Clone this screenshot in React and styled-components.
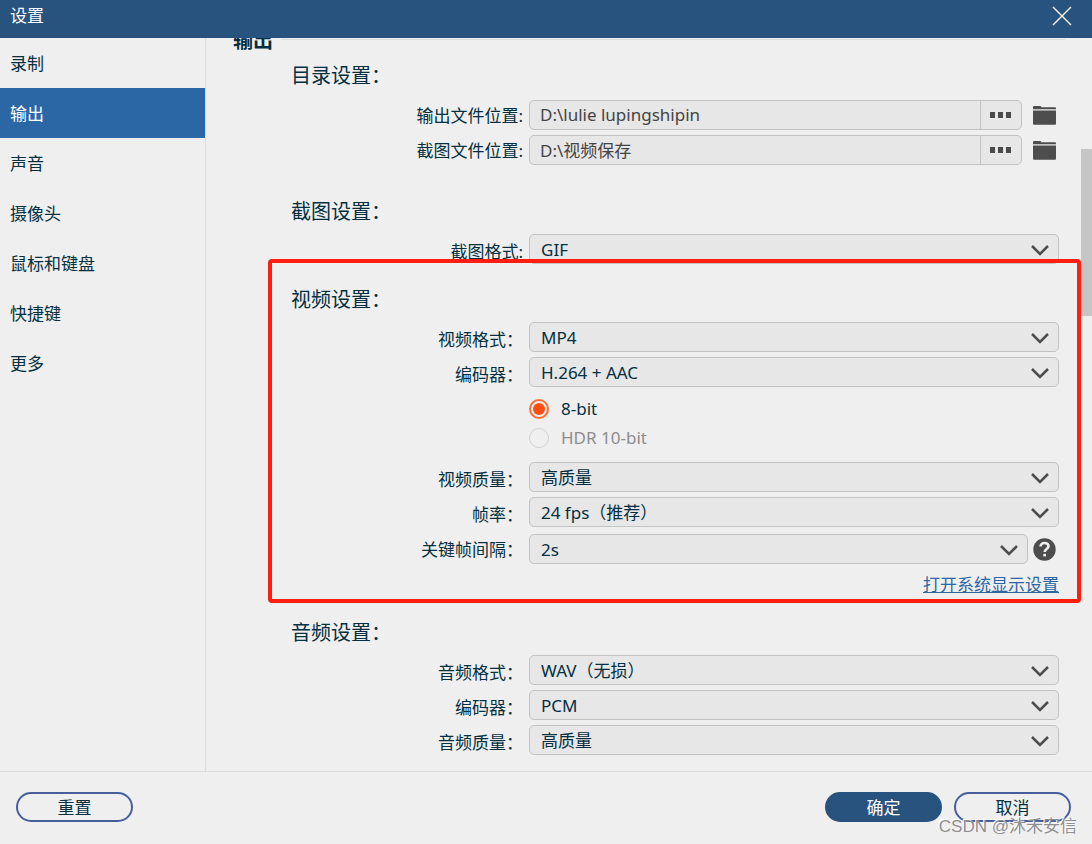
import React, { useState } from "react"
import styled, { createGlobalStyle } from "styled-components"

const tabs = ["录制", "输出", "声音", "摄像头", "鼠标和键盘", "快捷键", "更多"]

const PathRow = ({ id, label, value }) => (
  <Row>
    <RowLabel htmlFor={id}>{label}</RowLabel>
    <PathControls>
      <PathBox>
        <PathInput id={id} defaultValue={value} />
        <BrowseButton type="button" aria-label="浏览">
          <Dot />
          <Dot />
          <Dot />
        </BrowseButton>
      </PathBox>
      <IconButton type="button" aria-label="打开文件夹">
        <svg width="23" height="22" viewBox="0 0 23 22" fill="#4d4d4d">
          <path d="M0 3a1 1 0 0 1 1-1h6.5l1 1.2H22a1 1 0 0 1 1 1V5.2H0z" />
          <path d="M0 6.4h23v13.4a1 1 0 0 1-1 1H1a1 1 0 0 1-1-1z" />
        </svg>
      </IconButton>
    </PathControls>
  </Row>
)

const SelectBox = ({ id, value }) => (
  <SelectWrapper>
    <Select id={id} defaultValue={value}>
      <option>{value}</option>
    </Select>
    <Chevron width="18" height="12" viewBox="0 0 18 12" aria-hidden="true">
      <path d="M1 2L9 10L17 2" fill="none" stroke="#4d4d4d" strokeWidth="2.5" />
    </Chevron>
  </SelectWrapper>
)

const SelectRow = ({ id, label, value }) => (
  <Row>
    <RowLabel htmlFor={id} $low>
      {label}
    </RowLabel>
    <SelectBox id={id} value={value} />
  </Row>
)

const App = () => {
  const [active, setActive] = useState("输出")
  const [depth, setDepth] = useState("8")

  return (
    <Window>
      <GlobalStyle />
      <TitleBar>
        <Title>设置</Title>
        <CloseButton type="button" aria-label="关闭">
          <svg width="20" height="20" viewBox="0 0 20 20" stroke="#fff" strokeWidth="1.4">
            <path d="M1 1L19 19M19 1L1 19" />
          </svg>
        </CloseButton>
      </TitleBar>
      <Body>
        <Sidebar>
          {tabs.map((tab) => (
            <SidebarItem
              key={tab}
              type="button"
              $active={tab === active}
              onClick={() => setActive(tab)}
            >
              {tab}
            </SidebarItem>
          ))}
        </Sidebar>
        <Pane>
          <Scrolled>
            <PaneHeading>
              输出
              <HeadingLine />
            </PaneHeading>
            <Section $space={32}>
              <SectionTitle $space={9}>目录设置：</SectionTitle>
              <PathRow id="output-path" label="输出文件位置:" value="D:\lulie lupingshipin" />
              <PathRow id="shot-path" label="截图文件位置:" value="D:\视频保存" />
            </Section>
            <Section>
              <SectionTitle>截图设置：</SectionTitle>
              <SelectRow id="shot-format" label="截图格式:" value="GIF" />
            </Section>
            <MarkedSection>
              <SectionTitle>视频设置：</SectionTitle>
              <SelectRow id="video-format" label="视频格式：" value="MP4" />
              <SelectRow id="video-codec" label="编码器：" value="H.264 + AAC" />
              <RadioGroup>
                <RadioLabel>
                  <Radio
                    type="radio"
                    name="depth"
                    checked={depth === "8"}
                    onChange={() => setDepth("8")}
                  />
                  8-bit
                </RadioLabel>
                <RadioLabel $disabled>
                  <Radio type="radio" name="depth" disabled />
                  HDR 10-bit
                </RadioLabel>
              </RadioGroup>
              <SelectRow id="video-quality" label="视频质量：" value="高质量" />
              <SelectRow id="frame-rate" label="帧率：" value="24 fps（推荐）" />
              <KeyframeRow>
                <RowLabel htmlFor="keyframe">关键帧间隔：</RowLabel>
                <KeyframeControls>
                  <SelectBox id="keyframe" value="2s" />
                  <IconButton type="button" aria-label="帮助">
                    <svg width="23" height="23" viewBox="0 0 23 23" fill="none">
                      <circle cx="11.5" cy="11.5" r="11.2" fill="#4d4d4d" />
                      <path
                        d="M7.6 8.6C7.6 6.2 9.2 5 11.5 5s4 1.3 4 3.3c0 2.7-3.8 2.8-3.8 5.6"
                        stroke="#efefef"
                        strokeWidth="2.6"
                      />
                      <path d="M10.3 15.8h2.7v2.6h-2.7z" fill="#efefef" />
                    </svg>
                  </IconButton>
                </KeyframeControls>
              </KeyframeRow>
              <LinkLine>
                <SystemLink href="#display">打开系统显示设置</SystemLink>
              </LinkLine>
            </MarkedSection>
            <Section>
              <SectionTitle>音频设置：</SectionTitle>
              <SelectRow id="audio-format" label="音频格式：" value="WAV（无损）" />
              <SelectRow id="audio-codec" label="编码器：" value="PCM" />
              <SelectRow id="audio-quality" label="音频质量：" value="高质量" />
            </Section>
          </Scrolled>
          <Track>
            <Thumb />
          </Track>
        </Pane>
      </Body>
      <Footer>
        <PillButton type="button">重置</PillButton>
        <FooterRight>
          <PillButton type="button" $primary>
            确定
          </PillButton>
          <PillButton type="button">取消</PillButton>
        </FooterRight>
        <Watermark>CSDN @沐禾安信</Watermark>
      </Footer>
    </Window>
  )
}

const GlobalStyle = createGlobalStyle`
  * {
    box-sizing: border-box;
  }
  body {
    margin: 0;
    background: #efefef;
  }
  body, button, input, select {
    font-family: "Noto Sans", "Noto Sans CJK SC", sans-serif;
    font-size: 17px;
    font-weight: 400;
    color: #032f41;
  }
`
const Window = styled.div`
  display: flex;
  flex-direction: column;
  min-height: 100vh;
`
const TitleBar = styled.header`
  display: flex;
  align-items: center;
  justify-content: space-between;
  height: 38px;
  padding: 0 20px 6px 10px;
  background: #28537f;
`
const Title = styled.h1`
  margin: 0;
  color: #fff;
  font-size: 17px;
  font-weight: 400;
  line-height: 24px;
`
const CloseButton = styled.button`
  display: flex;
  padding: 0;
  border: 0;
  background: none;
`
const Body = styled.div`
  display: flex;
  flex: 1;
`
const Sidebar = styled.nav`
  flex: none;
  width: 206px;
  border-right: 1px solid #dcdcdc;
`
const SidebarItem = styled.button`
  display: block;
  width: 100%;
  height: 50px;
  padding: 0 10px 2px;
  border: 0;
  text-align: left;
  background: ${({ $active }) => ($active ? "#2b67a5" : "none")};
  color: ${({ $active }) => ($active ? "#fff" : "#032f41")};
`
const Pane = styled.main`
  display: flex;
  flex: 1;
  min-width: 0;
  overflow: hidden;
`
const Scrolled = styled.div`
  flex: 1;
  min-width: 0;
  margin-top: -14px;
  padding: 0 22px 0 85px;
`
const PaneHeading = styled.h2`
  display: flex;
  align-items: flex-start;
  gap: 8px;
  height: 30px;
  margin: 0 -6px 7px -58px;
  font-size: 20px;
  font-weight: 700;
  line-height: 34px;
`
const HeadingLine = styled.span`
  flex: 1;
  height: 1px;
  margin-top: 15px;
  background: #dcdcdc;
`
const Section = styled.section`
  position: relative;
  margin-bottom: ${({ $space = 21 }) => $space}px;

  &:last-child {
    margin-bottom: 16px;
  }
`
const MarkedSection = styled(Section)`
  &::after {
    content: "";
    position: absolute;
    inset: -26px -22px -6px -23px;
    border: 4px solid #ff1e10;
    border-radius: 4px;
    pointer-events: none;
  }
`
const SectionTitle = styled.h3`
  margin: 0 0 ${({ $space = 7 }) => $space}px;
  font-size: 20px;
  font-weight: 400;
  line-height: 30px;
`
const Row = styled.div`
  display: grid;
  grid-template-columns: 232px 1fr;
  column-gap: 6px;

  & + & {
    margin-top: 5px;
  }
`
const KeyframeRow = styled(Row)`
  padding-top: 2px;
`
const RowLabel = styled.label`
  padding-top: ${({ $low }) => ($low ? 6 : 4)}px;
  text-align: right;
  line-height: 24px;
`
const PathControls = styled.div`
  display: flex;
  align-items: center;
  gap: 11px;
  padding-right: 3px;
`
const PathBox = styled.div`
  display: flex;
  flex: 1;
  height: 30px;
  border: 1px solid #c3c3c3;
  border-radius: 5px;
  background: #e7e7e7;
`
const PathInput = styled.input`
  flex: 1;
  min-width: 0;
  padding: 0 10px 2px;
  border: 0;
  background: none;
  color: #444;
`
const BrowseButton = styled.button`
  display: flex;
  align-items: center;
  justify-content: center;
  gap: 3px;
  width: 41px;
  padding: 0 2px 0 0;
  border: 0;
  border-left: 1px solid #c3c3c3;
  background: none;
`
const Dot = styled.span`
  width: 5px;
  height: 6px;
  background: #4a4a4a;
`
const IconButton = styled.button`
  display: flex;
  padding: 0;
  border: 0;
  background: none;
`
const SelectWrapper = styled.div`
  position: relative;
  flex: 1;
`
const Select = styled.select`
  display: block;
  width: 100%;
  height: 30px;
  padding: 0 40px 0 11px;
  appearance: none;
  border: 1px solid #c3c3c3;
  border-radius: 5px;
  background: #e7e7e7;
`
const Chevron = styled.svg`
  position: absolute;
  top: 10px;
  right: 10px;
  pointer-events: none;
`
const RadioGroup = styled.div`
  padding: 7px 0 10px 238px;
`
const RadioLabel = styled.label`
  display: flex;
  align-items: center;
  gap: 12px;
  height: 29px;
  color: ${({ $disabled }) => ($disabled ? "#8c8c8c" : "#032f41")};
`
const Radio = styled.input`
  width: 20px;
  height: 20px;
  margin: 0;
  appearance: none;
  border: 1px solid #d2d2d2;
  border-radius: 50%;

  &:checked {
    border: 2px solid #ff6a35;
    padding: 2px;
    background: #ff4f0f content-box;
  }
`
const KeyframeControls = styled.div`
  display: flex;
  align-items: center;
  gap: 5px;
  padding-right: 3px;
`
const LinkLine = styled.div`
  margin-top: 9px;
  text-align: right;
  line-height: 24px;
`
const SystemLink = styled.a`
  color: #2b67a5;
`
const Track = styled.div`
  flex: none;
  width: 11px;
`
const Thumb = styled.div`
  height: 167px;
  margin-top: 111px;
  background: #c6c6c6;
`
const Footer = styled.footer`
  position: relative;
  display: flex;
  justify-content: space-between;
  padding: 20px 21px 22px 16px;
  border-top: 1px solid #dcdcdc;
`
const FooterRight = styled.div`
  display: flex;
  gap: 12px;
`
const PillButton = styled.button`
  width: 117px;
  height: 30px;
  padding: 0 0 2px;
  border: 2px solid ${({ $primary }) => ($primary ? "#28537f" : "#465f9c")};
  border-radius: 15px;
  background: ${({ $primary }) => ($primary ? "#28537f" : "none")};
  color: ${({ $primary }) => ($primary ? "#fff" : "#032f41")};
`
const Watermark = styled.span`
  position: absolute;
  right: 15px;
  bottom: 5px;
  font-family: "Liberation Sans", "Noto Sans CJK SC", sans-serif;
  font-size: 17px;
  line-height: 24px;
  color: #8f8f8f;
  text-shadow: -1px -1px 0 #fff;
  pointer-events: none;
`

export default App
